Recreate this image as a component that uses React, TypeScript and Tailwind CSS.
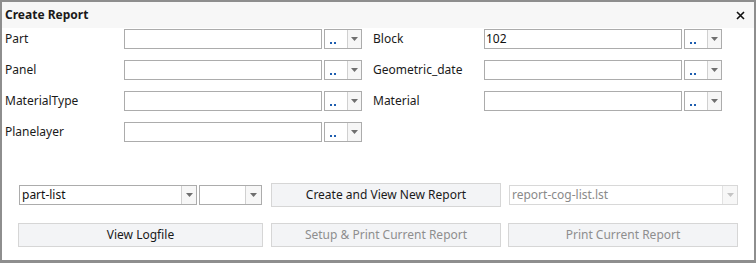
import React from "react";

const FONT = { fontFamily: '"Noto Sans", "Open Sans", sans-serif' };

function Arrow({ disabled = false }: { disabled?: boolean }) {
  return (
    <svg width="7" height="4" viewBox="0 0 7 4">
      <path d="M0 0 H7 L3.5 4 Z" fill={disabled ? "#c4c4c4" : "#6f6f6f"} />
    </svg>
  );
}

function DotCombo() {
  return (
    <div className="flex h-[20px] w-[38px] border border-[#acacac] bg-white">
      <div className="relative w-[23px] border-r border-[#d0d0d0]">
        <div className="absolute left-[5px] bottom-[4px] flex gap-[2px]">
          <span className="block h-[2px] w-[2px] bg-[#1f5fb0]" />
          <span className="block h-[2px] w-[2px] bg-[#1f5fb0]" />
        </div>
      </div>
      <div className="flex flex-1 items-center justify-center bg-[#f6f6f6]">
        <Arrow />
      </div>
    </div>
  );
}

function Field({ label, value = "", labelW }: { label: string; value?: string; labelW: string }) {
  return (
    <div className="flex h-[20px] items-center">
      <div className={`${labelW} text-[12px] text-[#1a1a1a] leading-none`}>{label}</div>
      <div className="flex h-[20px] w-[198px] items-center border border-[#acacac] bg-white pl-[1px] text-[12px] text-[#111]">
        {value}
      </div>
      <div className="ml-[2px]">
        <DotCombo />
      </div>
    </div>
  );
}

function Select({
  w,
  arrowW,
  text = "",
  disabled = false,
}: {
  w: string;
  arrowW: string;
  text?: string;
  disabled?: boolean;
}) {
  return (
    <div
      className={`flex h-[20px] ${w} border ${disabled ? "border-[#d8d8d8]" : "border-[#acacac]"} bg-white`}
    >
      <div
        className={`flex flex-1 items-center pl-[2px] text-[12px] ${disabled ? "text-[#8a8a8a]" : "text-[#111]"} ${disabled ? "border-r border-[#e2e2e2]" : "border-r border-[#d0d0d0]"}`}
      >
        {text}
      </div>
      <div className={`flex ${arrowW} items-center justify-center bg-[#f7f7f7]`}>
        <Arrow disabled={disabled} />
      </div>
    </div>
  );
}

function Button({ w, text, disabled = false }: { w: string; text: string; disabled?: boolean }) {
  return (
    <div
      className={`flex h-[24px] ${w} items-center justify-center border border-[#d6d6d6] bg-[#f3f4f6] text-[12px] ${disabled ? "text-[#8e8e8e]" : "text-[#1a1a1a]"}`}
    >
      {text}
    </div>
  );
}

export default function App() {
  return (
    <div style={FONT} className="h-[263px] w-[756px] bg-white">
      <div className="flex h-[263px] w-[756px] flex-col border-2 border-b-[3px] border-[#8e8e8e] bg-white">
        <div className="flex h-[26px] items-center justify-between bg-[#f7f7f7] pl-[3px] pr-[9px]">
          <span className="text-[12px] font-bold text-[#1a1a1a]">Create Report</span>
          <svg width="9" height="9" viewBox="0 0 9 9">
            <path d="M1 1 L8 8 M8 1 L1 8" stroke="#111" strokeWidth="1.6" />
          </svg>
        </div>

        <div className="mt-[1px] flex pl-[3px]">
          <div className="flex flex-col gap-[11px]">
            <Field label="Part" labelW="w-[119px]" />
            <Field label="Panel" labelW="w-[119px]" />
            <Field label="MaterialType" labelW="w-[119px]" />
            <Field label="Planelayer" labelW="w-[119px]" />
          </div>
          <div className="ml-[11px] flex flex-col gap-[11px]">
            <Field label="Block" value="102" labelW="w-[111px]" />
            <Field label="Geometric_date" labelW="w-[111px]" />
            <Field label="Material" labelW="w-[111px]" />
          </div>
        </div>

        <div className="mt-[41px] flex items-center pl-[17px]">
          <Select w="w-[178px]" arrowW="w-[14px]" text="part-list" />
          <div className="ml-[2px]">
            <Select w="w-[63px]" arrowW="w-[15px]" />
          </div>
          <div className="ml-[9px]">
            <Button w="w-[230px]" text="Create and View New Report" />
          </div>
          <div className="ml-[8px]">
            <Select w="w-[229px]" arrowW="w-[14px]" text="report-cog-list.lst" disabled />
          </div>
        </div>

        <div className="mt-[16px] flex items-center pl-[16px]">
          <Button w="w-[245px]" text="View Logfile" />
          <div className="ml-[8px]">
            <Button w="w-[230px]" text="Setup & Print Current Report" disabled />
          </div>
          <div className="ml-[7px]">
            <Button w="w-[230px]" text="Print Current Report" disabled />
          </div>
        </div>
      </div>
    </div>
  );
}
